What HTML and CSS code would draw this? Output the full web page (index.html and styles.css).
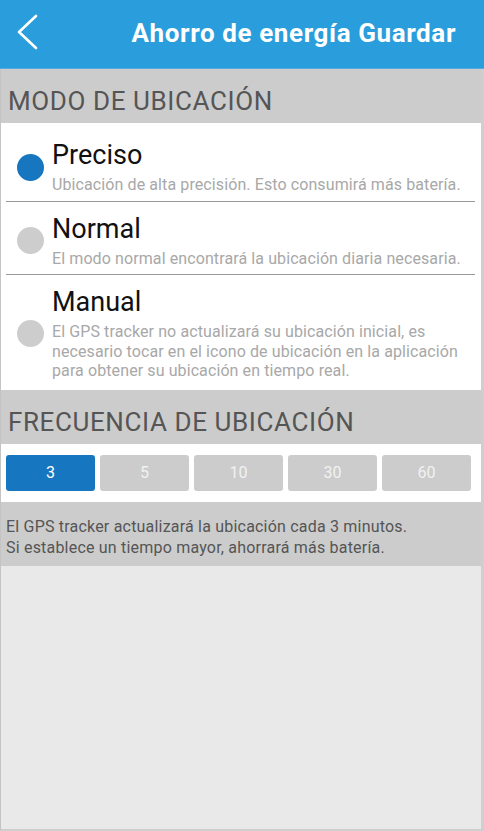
FILE: index.html
```html
<!DOCTYPE html>
<html lang="es">
<head>
<meta charset="utf-8">
<link rel="stylesheet" href="styles.css">
</head>
<body>
<div class="app">
  <header class="topbar">
    <svg class="back" width="24" height="38" viewBox="0 0 24 38">
      <polyline points="20,2 3,18 20,34" fill="none" stroke="#ffffff" stroke-width="2.6" stroke-linecap="round" stroke-linejoin="round"/>
    </svg>
    <h1 class="title">Ahorro de energía Guardar</h1>
  </header>
  <main class="content">
    <div class="section-head">MODO DE UBICACIÓN</div>
    <ul class="modes">
      <li class="mode">
        <span class="radio on"></span>
        <div class="mode-text">
          <div class="mode-title">Preciso</div>
          <div class="mode-sub">Ubicación de alta precisión. Esto consumirá más batería.</div>
        </div>
      </li>
      <li class="mode">
        <span class="radio"></span>
        <div class="mode-text">
          <div class="mode-title">Normal</div>
          <div class="mode-sub">El modo normal encontrará la ubicación diaria necesaria.</div>
        </div>
      </li>
      <li class="mode last">
        <span class="radio"></span>
        <div class="mode-text">
          <div class="mode-title">Manual</div>
          <div class="mode-sub">El GPS tracker no actualizará su ubicación inicial, es necesario tocar en el icono de ubicación en la aplicación para obtener su ubicación en tiempo real.</div>
        </div>
      </li>
    </ul>
    <div class="section-head">FRECUENCIA DE UBICACIÓN</div>
    <div class="freq">
      <button class="freq-btn active">3</button>
      <button class="freq-btn">5</button>
      <button class="freq-btn">10</button>
      <button class="freq-btn">30</button>
      <button class="freq-btn">60</button>
    </div>
    <p class="note">El GPS tracker actualizará la ubicación cada 3 minutos.<br>Si establece un tiempo mayor, ahorrará más batería.</p>
  </main>
</div>
</body>
</html>
```
FILE: styles.css
```css
* { box-sizing: border-box; }
html, body { margin: 0; padding: 0; }
body {
  font-family: Roboto, "Noto Sans", Arial, sans-serif;
  background: #e9e9e9;
}
.app {
  width: 484px;
  height: 831px;
  display: flex;
  flex-direction: column;
  overflow: hidden;
}
.topbar {
  height: 69px;
  flex: none;
  background: #2a9edc;
  border-bottom: 1px solid #53aee0;
  display: flex;
  align-items: center;
  padding: 0 29px 0 16px;
}
.back { display: block; margin-top: -2px; }
.title {
  margin: 0 -1px 2px auto;
  color: #ffffff;
  font-size: 26px;
  font-weight: 700;
  letter-spacing: 0.6px;
  line-height: 30px;
  white-space: nowrap;
}
.content {
  flex: 1;
  background: #e9e9e9;
  border-left: 1px solid #c4c4c4;
  border-right: 3px solid #cfcfcf;
  border-bottom: 2px solid #cfcfcf;
}
.section-head {
  background: #cccccc;
  height: 54px;
  padding: 10px 0 0 7px;
  line-height: 44px;
  font-size: 26px;
  letter-spacing: 0.6px;
  color: #555555;
  white-space: nowrap;
}
.modes {
  list-style: none;
  margin: 0;
  padding: 5px 0 0 0;
  background: #ffffff;
}
.mode {
  display: flex;
  align-items: center;
  gap: 8px;
  padding: 12px 8px 7px 16px;
  position: relative;
}
.mode::after {
  content: "";
  position: absolute;
  left: 5px;
  right: 6px;
  bottom: 0;
  border-bottom: 1px solid #9a9a9a;
}
.mode.last { padding-bottom: 9px; }
.mode.last::after { display: none; }
.radio {
  flex: none;
  width: 27px;
  height: 27px;
  border-radius: 50%;
  background: #cdcdcd;
}
.radio.on { background: #1677c0; }
.mode-text { flex: 1; min-width: 0; }
.mode-title {
  font-size: 27px;
  line-height: 30px;
  color: #111111;
}
.mode-sub {
  margin-top: 5px;
  font-size: 16px;
  letter-spacing: 0.1px;
  line-height: 19.5px;
  color: #a8a8a8;
}
.freq {
  background: #ffffff;
  display: grid;
  grid-template-columns: repeat(5, 1fr);
  gap: 5px;
  padding: 11px 10px 11px 5px;
}
.freq-btn {
  height: 36px;
  border: none;
  border-radius: 3px;
  background: #cccccc;
  color: #f2f2f2;
  font-family: Roboto, "Noto Sans", Arial, sans-serif;
  font-size: 16px;
  padding: 0;
}
.freq-btn.active {
  background: #1677c0;
  color: #ffffff;
}
.note {
  margin: 0;
  background: #cccccc;
  padding: 14px 6px 8px 5px;
  font-size: 16px;
  letter-spacing: 0.2px;
  line-height: 21px;
  color: #555555;
}
```
